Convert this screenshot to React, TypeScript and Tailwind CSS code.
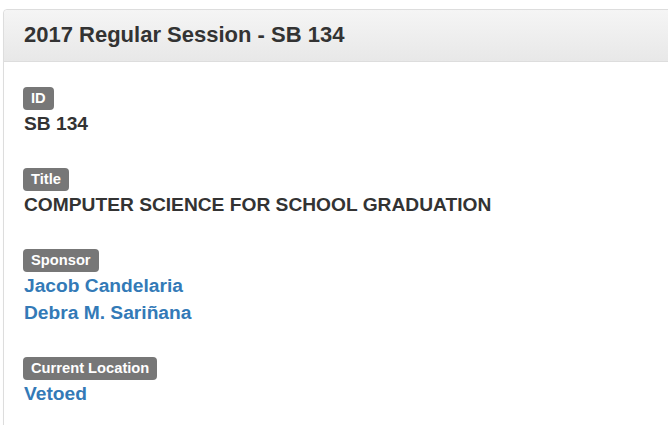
import React from "react";

const Label = ({ children }: { children: React.ReactNode }) => (
  <div className="flex">
    <span className="block bg-[#777777] text-white font-bold text-[14.7px] leading-[15px] pt-[4px] pb-[4px] px-2 rounded-[4px]">
      {children}
    </span>
  </div>
);

export default function App() {
  return (
    <div
      className="w-[668px] h-[425px] overflow-hidden bg-white pt-[9px] pl-[3px]"
      style={{ fontFamily: '"Liberation Sans", Arial, sans-serif' }}
    >
      <div className="w-[720px] h-[500px] border border-[#dddddd] rounded-tl-[4px] shadow-[0_1px_1px_rgba(0,0,0,0.05)] bg-white">
        <div className="bg-gradient-to-b from-[#f5f5f5] to-[#e8e8e8] border-b border-[#dddddd] rounded-tl-[4px] pl-[20px] pt-[12px] pb-[14px]">
          <h3 className="text-[22px] leading-[25px] font-bold text-[#333333]">
            2017 Regular Session - SB 134
          </h3>
        </div>
        <div className="pl-[19px] pt-[25px] flex flex-col gap-[31px] text-[19.2px] leading-[27px] font-bold">
          <div>
            <Label>ID</Label>
            <div className="pl-[1px] text-[#333333]">SB 134</div>
          </div>
          <div>
            <Label>Title</Label>
            <div className="pl-[1px] text-[#333333]">COMPUTER SCIENCE FOR SCHOOL GRADUATION</div>
          </div>
          <div>
            <Label>Sponsor</Label>
            <div className="pl-[1px] text-[#337ab7]">Jacob Candelaria</div>
            <div className="pl-[1px] text-[#337ab7]">Debra M. Sariñana</div>
          </div>
          <div>
            <Label>Current Location</Label>
            <div className="pl-[1px] text-[#337ab7]">Vetoed</div>
          </div>
        </div>
      </div>
    </div>
  );
}
